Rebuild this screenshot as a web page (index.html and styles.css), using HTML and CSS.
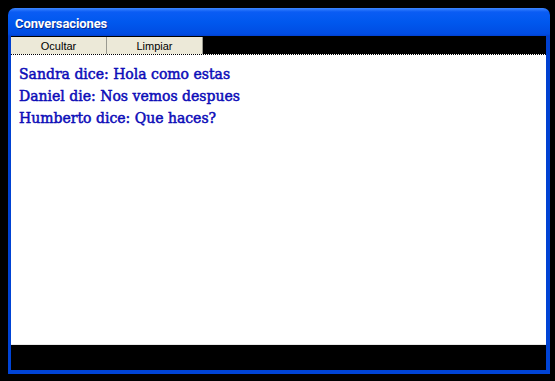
FILE: index.html
```html
<!DOCTYPE html>
<html lang="es">
<head>
    <meta charset="UTF-8">
    <title>Conversaciones</title>
    <link rel="stylesheet" href="styles.css">
</head>
<body>

<div class="ventana">
    <div class="titulo">Conversaciones</div>
    <div class="cliente">
        <div class="barra">
            <button class="btn">Ocultar</button>
            <button class="btn">Limpiar</button>
        </div>
        <div class="mensajes">
            <p>Sandra dice: Hola como estas</p>
            <p>Daniel die: Nos vemos despues</p>
            <p>Humberto dice: Que haces?</p>
        </div>
        <div class="pie"></div>
    </div>
</div>

</body>
</html>
```

FILE: styles.css
```css
body { margin: 0; background-color: #000; width: 555px; height: 381px; overflow: hidden; }
.ventana { margin: 8px 0 0 8px; width: 542px; height: 366px; box-sizing: border-box; padding: 0 4px 4px 3px; display: flex; flex-direction: column; border-radius: 7px 7px 0 0; background: linear-gradient(to bottom, #3d86ff 0, #0a5cf4 4px, #0058ee 14px, #004ce2 26px, #0040d0 28px, #0044d6 100%); }
.titulo { height: 28px; line-height: 32px; padding-left: 4px; color: #fff; font-family: Roboto, "Liberation Sans", sans-serif; font-weight: bold; font-size: 13px; letter-spacing: -0.1px; text-shadow: 1px 1px 0 #0a2a90; }
.cliente { flex: 1; background-color: #000; display: flex; flex-direction: column; }
.barra { height: 18px; display: flex; box-sizing: border-box; padding-top: 1px; }
.btn { width: 96px; height: 17px; margin: 0; padding: 0; border: none; border-right: 1px solid #9a9a90; background-color: #ece9d8; font-family: "Liberation Sans", Arial, sans-serif; font-size: 11px; color: #000; }
.mensajes { height: 291px; background-color: #fff; border-top: 1px dotted #000; border-bottom: 1px solid #e8e8e8; padding: 8px 8px; box-sizing: border-box; }
.mensajes p { margin: 0; height: 22px; line-height: 22px; font-family: "DejaVu Serif", serif; font-size: 14px; color: #0c0cb8; -webkit-text-stroke: 0.5px #0c0cb8; }
.pie { flex: 1; }
```
